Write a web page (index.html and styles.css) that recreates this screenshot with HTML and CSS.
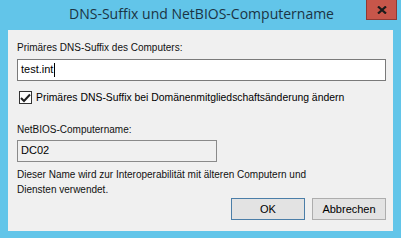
FILE: index.html
```html
<!DOCTYPE html>
<html lang="de">
<head>
    <meta charset="UTF-8">
    <title>DNS-Suffix und NetBIOS-Computername</title>
    <link rel="stylesheet" href="styles.css">
</head>
<body>
    <div class="window">
        <div class="titlebar">
            <span class="title">DNS-Suffix und NetBIOS-Computername</span>
            <button class="close">
                <svg width="10" height="8" viewBox="0 0 10 8"><path d="M1 0.5 L9 7.5 M9 0.5 L1 7.5" stroke="#1a1a1a" stroke-width="2.2"/></svg>
            </button>
        </div>
        <div class="client">
            <label class="label" for="suffix">Primäres DNS-Suffix des Computers:</label>
            <div class="textbox"><span id="suffix">test.int</span><span class="caret"></span></div>
            <label class="check">
                <span class="box">
                    <svg width="11" height="10" viewBox="0 0 11 10"><path d="M1 5 L4 8 L10 1.5" fill="none" stroke="#222" stroke-width="2"/></svg>
                </span>
                Primäres DNS-Suffix bei Domänenmitgliedschaftsänderung ändern
            </label>
            <div class="label netbios">NetBIOS-Computername:</div>
            <div class="textbox readonly">DC02</div>
            <p class="note">Dieser Name wird zur Interoperabilität mit älteren Computern und Diensten verwendet.</p>
            <div class="buttons">
                <button class="button default">OK</button>
                <button class="button">Abbrechen</button>
            </div>
        </div>
    </div>
</body>
</html>
```

FILE: styles.css
```css
body {
    margin: 0;
    font-family: "Liberation Sans", Arial, sans-serif;
    font-size: 10px;
    color: #000;
}
.window {
    width: 401px;
    height: 238px;
    background-color: #62c5e9;
    box-sizing: border-box;
    padding: 0 8px 7px 8px;
    display: flex;
    flex-direction: column;
}
.titlebar {
    height: 30px;
    display: flex;
    align-items: center;
    justify-content: center;
    position: relative;
}
.title {
    font-family: "Open Sans", "Noto Sans", sans-serif;
    font-size: 14px;
    color: #1b3444;
    margin-left: 2px;
    margin-top: -3px;
}
.close {
    position: absolute;
    top: 0;
    right: -4px;
    width: 31px;
    height: 20px;
    background-color: #c7564a;
    border: 1px solid #8f3a33;
    border-top: none;
    padding: 0;
    display: flex;
    align-items: center;
    justify-content: center;
}
.client {
    flex: 1;
    background-color: #f0f0f0;
    padding: 12px 7px 0 9px;
    display: flex;
    flex-direction: column;
}
.label {
    display: block;
    color: #111;
    height: 15px;
}
.textbox {
    margin-top: 2px;
    height: 22px;
    box-sizing: border-box;
    border: 1px solid #7a7a7a;
    background-color: #fff;
    padding: 3px 0 0 3px;
    font-size: 11px;
    display: flex;
    align-items: flex-start;
}
.caret {
    display: inline-block;
    width: 1px;
    height: 14px;
    background-color: #000;
    margin-left: 1px;
}
.check {
    margin-top: 9px;
    display: flex;
    align-items: center;
    gap: 4px;
    padding-left: 2px;
    height: 15px;
    font-size: 10.4px;
}
.box {
    width: 13px;
    height: 13px;
    box-sizing: border-box;
    border: 1px solid #333;
    background-color: #fff;
    display: flex;
    align-items: center;
    justify-content: center;
}
.netbios {
    margin-top: 19px;
}
.readonly {
    width: 200px;
    background-color: #f0f0f0;
    border-color: #8a8a8a;
    margin-top: 1px;
}
.note {
    margin: 5px 0 0 0;
    line-height: 15px;
    width: 310px;
    color: #111;
}
.buttons {
    display: flex;
    justify-content: flex-end;
    gap: 7px;
    margin-top: 1px;
}
.button {
    width: 74px;
    height: 22px;
    font-family: "Liberation Sans", Arial, sans-serif;
    font-size: 11px;
    background-color: #e3e3e3;
    border: 1px solid #adadad;
    padding: 0;
}
.button.default {
    border-color: #4b7ea8;
}
```
